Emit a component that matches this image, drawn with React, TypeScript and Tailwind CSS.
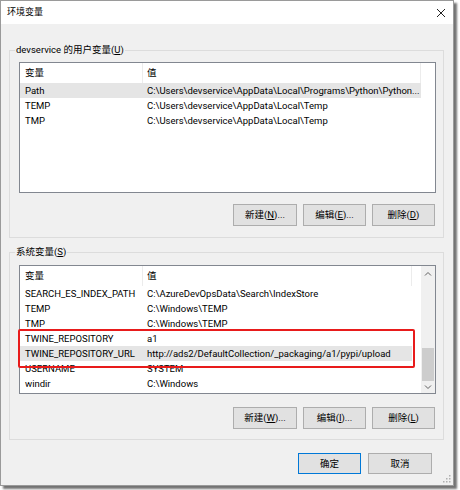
import React from "react";

type Row = { name: string; value: string; sel?: boolean };

const userRows: Row[] = [
  { name: "Path", value: "C:\\Users\\devservice\\AppData\\Local\\Programs\\Python\\Python...", sel: true },
  { name: "TEMP", value: "C:\\Users\\devservice\\AppData\\Local\\Temp" },
  { name: "TMP", value: "C:\\Users\\devservice\\AppData\\Local\\Temp" },
];

const sysRows: Row[] = [
  { name: "SEARCH_ES_INDEX_PATH", value: "C:\\AzureDevOpsData\\Search\\IndexStore" },
  { name: "TEMP", value: "C:\\Windows\\TEMP" },
  { name: "TMP", value: "C:\\Windows\\TEMP" },
  { name: "TWINE_REPOSITORY", value: "a1" },
  { name: "TWINE_REPOSITORY_URL", value: "http://ads2/DefaultCollection/_packaging/a1/pypi/upload", sel: true },
  { name: "USERNAME", value: "SYSTEM" },
  { name: "windir", value: "C:\\Windows" },
];

function Btn({ children, wide }: { children: React.ReactNode; wide?: boolean }) {
  return (
    <div
      className={
        wide
          ? "w-[64px] h-[22px] border border-[#adadad] bg-[#e1e1e1] flex items-center justify-center"
          : "w-[63px] h-[22px] border border-[#adadad] bg-[#e1e1e1] flex items-center justify-center"
      }
    >
      {children}
    </div>
  );
}

function Mn({ c }: { c: string }) {
  return <span className="underline underline-offset-[1px] decoration-[1px]">{c}</span>;
}

function ListRows({ rows, narrow }: { rows: Row[]; narrow?: boolean }) {
  return (
    <div className="flex flex-col">
      <div className="flex h-[20px] items-center">
        <div className="w-[123px] h-full pl-[5px] flex items-center border-r border-[#ececec]">变量</div>
        <div
          className={
            narrow
              ? "w-[269px] h-full pl-[4px] flex items-center border-r border-[#ececec]"
              : "w-[278px] h-full pl-[4px] flex items-center border-r border-[#ececec]"
          }
        >
          值
        </div>
      </div>
      {rows.map((r) => (
        <div
          key={r.name}
          className={r.sel ? "flex h-[15px] items-center bg-[#e5e5e5] w-fit" : "flex h-[15px] items-center w-fit"}
        >
          <div className="w-[123px] pl-[5px] whitespace-nowrap overflow-hidden">{r.name}</div>
          <div
            className={
              narrow ? "w-[269px] pl-[4px] whitespace-nowrap" : "w-[278px] pl-[4px] whitespace-nowrap"
            }
          >
            {r.value}
          </div>
        </div>
      ))}
    </div>
  );
}

function Chevron({ up }: { up?: boolean }) {
  return (
    <svg width="8" height="5" viewBox="0 0 8 5">
      <polyline
        points={up ? "1,4.5 4,1.5 7,4.5" : "1,0.5 4,3.5 7,0.5"}
        fill="none"
        stroke="#606060"
        strokeWidth="1"
      />
    </svg>
  );
}

export default function App() {
  return (
    <div className="w-[460px] h-[490px] bg-white font-['Roboto','Noto_Sans_CJK_SC',sans-serif] text-[9.5px] text-black leading-none">
      <div className="relative w-[454px] h-[486px] border border-[#9a9a9a] bg-[#f0f0f0] shadow-[3px_3px_2px_rgba(0,0,0,0.55)] flex flex-col">
        {/* title bar */}
        <div className="h-[23px] bg-white flex items-center justify-between pl-[6px] pr-[7px]">
          <span className="text-[9px]">环境变量</span>
          <svg width="10" height="10" viewBox="0 0 10 10">
            <line x1="1" y1="1" x2="9" y2="9" stroke="#222" strokeWidth="1" />
            <line x1="9" y1="1" x2="1" y2="9" stroke="#222" strokeWidth="1" />
          </svg>
        </div>

        <div className="flex flex-col pt-[26px] pl-[8px] pr-[9px]">
          {/* user variables */}
          <div className="relative h-[188px] border border-[#dcdcdc] pt-[11px] pl-[9px] pr-[7px] pb-[11px] flex flex-col">
            <span className="absolute left-[5px] top-[-7px] bg-[#f0f0f0] px-[1px] leading-[12px] whitespace-nowrap">
              devservice 的用户变量(<Mn c="U" />)
            </span>
            <div className="h-[131px] border border-[#828790] bg-white overflow-hidden">
              <ListRows rows={userRows} />
            </div>
            <div className="mt-[11px] flex justify-end gap-[6px] pr-[1px]">
              <Btn wide>
                新建(<Mn c="N" />)...
              </Btn>
              <Btn>
                编辑(<Mn c="E" />)...
              </Btn>
              <Btn>
                删除(<Mn c="D" />)
              </Btn>
            </div>
          </div>

          {/* system variables */}
          <div className="relative mt-[14px] h-[188px] border border-[#dcdcdc] pt-[12px] pl-[9px] pr-[7px] pb-[10px] flex flex-col">
            <span className="absolute left-[5px] top-[-7px] bg-[#f0f0f0] px-[1px] leading-[12px] whitespace-nowrap">
              系统变量(<Mn c="S" />)
            </span>
            <div className="h-[129px] border border-[#828790] bg-white overflow-hidden flex">
              <div className="flex-1 overflow-hidden">
                <ListRows rows={sysRows} narrow />
              </div>
              <div className="w-[14px] bg-[#f0f0f0] flex flex-col">
                <div className="h-[15px] flex items-center justify-center">
                  <Chevron up />
                </div>
                <div className="flex-1 flex flex-col justify-end">
                  <div className="h-[33px] mx-[1px] bg-[#cdcdcd]" />
                </div>
                <div className="h-[12px] flex items-center justify-center">
                  <Chevron />
                </div>
              </div>
            </div>
            <div className="mt-[13px] flex justify-end gap-[6px] pr-[1px]">
              <Btn wide>
                新建(<Mn c="W" />)...
              </Btn>
              <Btn>
                编辑(<Mn c="I" />)...
              </Btn>
              <Btn>
                删除(<Mn c="L" />)
              </Btn>
            </div>
            {/* red highlight annotation */}
            <div className="absolute left-[8px] top-[76px] w-[397px] h-[39px] border-2 border-[#e81b1b] rounded-[2px] pointer-events-none" />
          </div>

          {/* OK / Cancel */}
          <div className="mt-[13px] flex justify-end gap-[7px] pr-[12px]">
            <div className="w-[63px] h-[21px] border border-[#0078d7] bg-[#e1e1e1] flex items-center justify-center">
              确定
            </div>
            <div className="w-[64px] h-[21px] border border-[#adadad] bg-[#e1e1e1] flex items-center justify-center">
              取消
            </div>
          </div>
        </div>

        {/* resize grip */}
        <svg className="absolute right-[2px] bottom-[2px]" width="8" height="8" viewBox="0 0 8 8">
          <rect x="6" y="0" width="1.5" height="1.5" fill="#b0b0b0" />
          <rect x="3" y="3" width="1.5" height="1.5" fill="#b0b0b0" />
          <rect x="6" y="3" width="1.5" height="1.5" fill="#b0b0b0" />
          <rect x="0" y="6" width="1.5" height="1.5" fill="#b0b0b0" />
          <rect x="3" y="6" width="1.5" height="1.5" fill="#b0b0b0" />
          <rect x="6" y="6" width="1.5" height="1.5" fill="#b0b0b0" />
        </svg>
      </div>
    </div>
  );
}
